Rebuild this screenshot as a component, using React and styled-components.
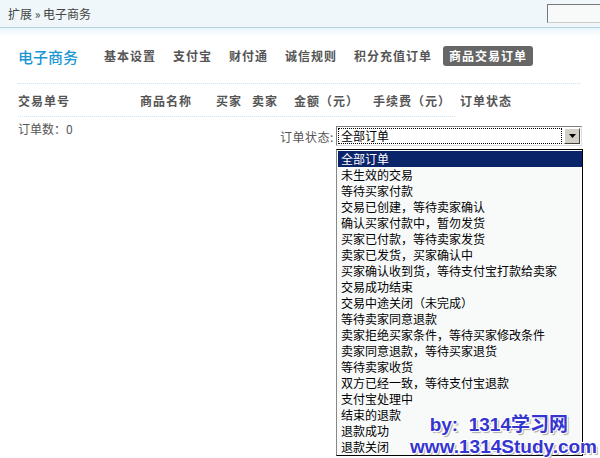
import React from 'react';
import styled, { createGlobalStyle } from 'styled-components';

const GlobalStyle = createGlobalStyle`
  html, body {
    margin: 0;
    padding: 0;
    background: #fff;
    font-family: "Noto Sans CJK SC", "Liberation Sans", sans-serif;
    font-size: 12px;
    color: #555;
  }
`;

const Page = styled.div`
  position: relative;
  width: 600px;
  height: 458px;
  overflow: hidden;
`;

const TopBar = styled.div`
  height: 27px;
  background: #eff7fa;
  border-bottom: 1px solid #b3d2df;
  display: flex;
  align-items: center;
  justify-content: space-between;
  padding-left: 8px;
  color: #444;
`;

const TopShade = styled.div`
  height: 7px;
  background: linear-gradient(#eaf5fa, #fbfdfe);
`;

const Search = styled.input`
  width: 56px;
  height: 17px;
  margin-right: -4px;
  border: 1px solid #777;
  border-right: none;
  border-bottom-color: #ccc;
  background: #f8fafa;
  padding: 0;
`;

const Main = styled.div`
  padding: 0 18px;
`;

const Nav = styled.div`
  display: flex;
  align-items: center;
  height: 42px;
  padding-bottom: 6px;
  border-bottom: 1px dotted #c9e6f5;
  margin-right: 2px;
`;

const Title = styled.div`
  color: #1a96d2;
  font-size: 15px;
  margin-right: 24px;
  font-weight: 500;
`;

const NavItem = styled.div`
  font-weight: bold;
  font-size: 12px;
  letter-spacing: 1px;
  color: ${p => (p.active ? '#fff' : '#555')};
  background: ${p => (p.active ? '#666' : 'transparent')};
  border-radius: 3px;
  padding: ${p => (p.active ? '1px 6px' : '1px 2px')};
  margin-right: ${p => (p.active ? '0' : '13px')};
  margin-left: ${p => (p.active ? '-4px' : '0')};
  line-height: 18px;
`;

const HeadRow = styled.div`
  display: flex;
  align-items: center;
  height: 32px;
  width: 437px;
  border-bottom: 1px dotted #c9e6f5;
`;

const HeadCell = styled.div`
  font-weight: bold;
  letter-spacing: 1px;
  width: ${p => p.w}px;
  flex: none;
  white-space: nowrap;
`;

const Count = styled.div`
  margin-top: 5px;
  line-height: 14px;
`;

const FilterRow = styled.div`
  display: flex;
  align-items: center;
  margin-top: -10px;
  padding-left: 262px;
  white-space: nowrap;
`;

const FilterLabel = styled.span`
  flex: none;
  width: 56px;
  letter-spacing: 0.5px;
`;

const Select = styled.div`
  position: relative;
  flex: none;
  width: 242px;
  height: 18px;
  border: 1px solid #7f7f7f;
  border-right-color: #ddd;
  border-bottom-color: #ddd;
  background: #fff;
  display: flex;
  align-items: center;
  padding: 0 1px;
`;

const SelectValue = styled.div`
  flex: 1;
  height: 14px;
  border: 1px dotted #000;
  margin-right: 2px;
  color: #000;
  line-height: 14px;
  padding-left: 2px;
`;

const Arrow = styled.div`
  width: 16px;
  height: 16px;
  background: #d4d0c8;
  border: 1px solid;
  border-color: #fff #404040 #404040 #fff;
  box-sizing: border-box;
  display: flex;
  align-items: center;
  justify-content: center;
`;

const List = styled.div`
  position: absolute;
  left: 336px;
  top: 149px;
  width: 244px;
  border: 1px solid #000;
  border-left-color: #888;
  background: #f8fafa;
  padding: 1px 0 0 1px;
`;

const Option = styled.div`
  height: 16px;
  line-height: 16px;
  padding-left: 3px;
  color: ${p => (p.selected ? '#fff' : '#000')};
  background: ${p => (p.selected ? '#0a246a' : 'transparent')};
  white-space: nowrap;
`;

const Watermark = styled.div`
  position: absolute;
  right: 3px;
  bottom: 0;
  text-align: right;
  font-family: "Liberation Sans", "Noto Sans CJK SC", sans-serif;
  font-weight: bold;
  font-size: 19px;
  line-height: 22px;
  color: #3535d0;
  text-shadow: 1px 1px 0 #fff, -1px -1px 0 #fff, 1px -1px 0 #fff, -1px 1px 0 #fff, 2px 2px 1px #aaa;
`;

const WmLine = styled.div`
  padding-right: ${p => p.pad || 0}px;
`;

const options = [
  '全部订单',
  '未生效的交易',
  '等待买家付款',
  '交易已创建，等待卖家确认',
  '确认买家付款中，暂勿发货',
  '买家已付款，等待卖家发货',
  '卖家已发货，买家确认中',
  '买家确认收到货，等待支付宝打款给卖家',
  '交易成功结束',
  '交易中途关闭（未完成）',
  '等待卖家同意退款',
  '卖家拒绝买家条件，等待买家修改条件',
  '卖家同意退款，等待买家退货',
  '等待卖家收货',
  '双方已经一致，等待支付宝退款',
  '支付宝处理中',
  '结束的退款',
  '退款成功',
  '退款关闭',
];

const heads = [
  ['交易单号', 122],
  ['商品名称', 76],
  ['买家', 36],
  ['卖家', 42],
  ['金额（元）', 79],
  ['手续费（元）', 87],
  ['订单状态', 70],
];

const App = () => (
  <Page>
    <GlobalStyle />
    <TopBar>
      <span>扩展 » 电子商务</span>
      <Search />
    </TopBar>
    <TopShade />
    <Main>
      <Nav>
        <Title>电子商务</Title>
        <NavItem>基本设置</NavItem>
        <NavItem>支付宝</NavItem>
        <NavItem>财付通</NavItem>
        <NavItem>诚信规则</NavItem>
        <NavItem>积分充值订单</NavItem>
        <NavItem active>商品交易订单</NavItem>
      </Nav>
      <HeadRow>
        {heads.map(([t, w]) => (
          <HeadCell key={t} w={w}>{t}</HeadCell>
        ))}
      </HeadRow>
      <Count>订单数：0</Count>
      <FilterRow>
        <FilterLabel>订单状态:</FilterLabel>
        <Select>
          <SelectValue>全部订单</SelectValue>
          <Arrow>
            <svg width="7" height="4" viewBox="0 0 7 4">
              <path d="M0 0h7L3.5 4z" fill="#000" />
            </svg>
          </Arrow>
        </Select>
      </FilterRow>
    </Main>
    <List>
      {options.map((o, i) => (
        <Option key={o} selected={i === 0}>{o}</Option>
      ))}
    </List>
    <Watermark>
      <WmLine pad={29}>by:&nbsp; 1314学习网</WmLine>
      <WmLine>www.1314Study.com</WmLine>
    </Watermark>
  </Page>
);

export default App;
